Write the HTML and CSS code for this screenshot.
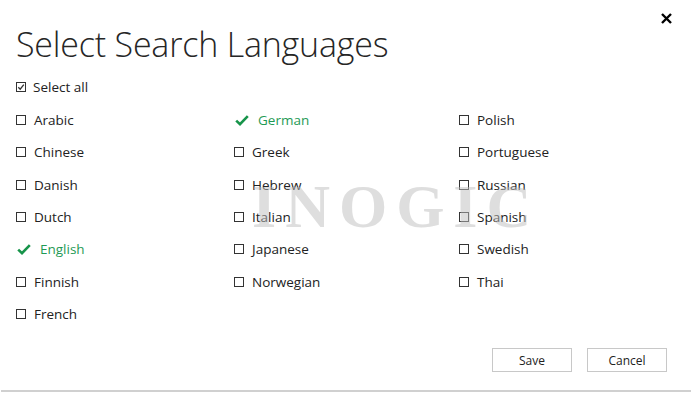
FILE: index.html
```html
<!DOCTYPE html>
<html lang="en">
<head>
  <meta charset="UTF-8">
  <title>Select Search Languages</title>
  <link rel="stylesheet" href="styles.css">
</head>
<body>
  <div class="dialog">
    <button class="close" aria-label="Close">
      <svg width="11" height="11" viewBox="0 0 11 11"><path d="M1 1L10 10M10 1L1 10" stroke="#000" stroke-width="2.4"/></svg>
    </button>
    <h1>Select Search Languages</h1>
    <div class="item all">
      <svg class="box" width="10" height="10" viewBox="0 0 10 10"><rect x="0.5" y="0.5" width="9" height="9" fill="none" stroke="#333"/><path d="M2.3 5.2L4.2 7.2L7.8 2.6" fill="none" stroke="#333" stroke-width="1.3"/></svg>
      <span>Select all</span>
    </div>
    <div class="cols">
      <div class="col">
        <div class="item"><span class="box"></span>Arabic</div>
        <div class="item"><span class="box"></span>Chinese</div>
        <div class="item"><span class="box"></span>Danish</div>
        <div class="item"><span class="box"></span>Dutch</div>
        <div class="item on"><svg class="tick" width="14" height="11" viewBox="0 0 14 11"><path d="M1.2 5.6L5 9.2L12.8 1.2" fill="none" stroke="#17944a" stroke-width="2.6"/></svg>English</div>
        <div class="item"><span class="box"></span>Finnish</div>
        <div class="item"><span class="box"></span>French</div>
      </div>
      <div class="col">
        <div class="item on"><svg class="tick" width="14" height="11" viewBox="0 0 14 11"><path d="M1.2 5.6L5 9.2L12.8 1.2" fill="none" stroke="#17944a" stroke-width="2.6"/></svg>German</div>
        <div class="item"><span class="box"></span>Greek</div>
        <div class="item"><span class="box"></span>Hebrew</div>
        <div class="item"><span class="box"></span>Italian</div>
        <div class="item"><span class="box"></span>Japanese</div>
        <div class="item"><span class="box"></span>Norwegian</div>
      </div>
      <div class="col">
        <div class="item"><span class="box"></span>Polish</div>
        <div class="item"><span class="box"></span>Portuguese</div>
        <div class="item"><span class="box"></span>Russian</div>
        <div class="item"><span class="box"></span>Spanish</div>
        <div class="item"><span class="box"></span>Swedish</div>
        <div class="item"><span class="box"></span>Thai</div>
      </div>
    </div>
    <div class="watermark">INOGIC</div>
    <div class="actions">
      <button class="btn">Save</button>
      <button class="btn">Cancel</button>
    </div>
  </div>
</body>
</html>
```

FILE: styles.css
```css
body { margin: 0; background: #fff; font-family: "Open Sans", Arial, sans-serif; color: #222; }
.dialog { position: relative; width: 690px; height: 392px; border-bottom: 2px solid #d0d0d0; margin-left: 1px; box-sizing: border-box; padding: 22px 0 0 15px; }
.close { position: absolute; top: 13px; right: 19px; border: 0; background: none; padding: 0; width: 11px; height: 11px; line-height: 0; }
h1 { margin: 0; font-weight: 300; font-size: 34px; line-height: 44px; color: #262626; letter-spacing: -0.2px; }
.item { display: flex; align-items: center; height: 32.3px; font-size: 13.5px; color: #222; }
.item .box { display: inline-block; width: 8px; height: 8px; border: 1px solid #333; margin-right: 8px; }
.item svg.box { width: 10px; height: 10px; border: 0; margin-right: 7px; }
.all { height: 22px; margin-top: 10px; margin-bottom: 6px; }
.item.on { color: #1f9a55; }
.tick { margin-right: 9px; margin-left: 1px; }
.cols { display: grid; grid-template-columns: 218px 225px 1fr; }
.watermark { position: absolute; left: 251px; top: 175px; font-family: "Liberation Serif", serif; font-weight: bold; font-size: 62px; line-height: 62px; letter-spacing: 9px; color: rgba(190, 190, 190, 0.5); pointer-events: none; }
.actions { display: flex; justify-content: flex-end; gap: 15px; padding-right: 24px; margin-top: 18px; }
.btn { width: 80px; height: 24px; background: #fff; border: 1px solid #c8c8c8; font-family: "Open Sans", Arial, sans-serif; font-size: 12px; color: #222; padding: 0; }
```
